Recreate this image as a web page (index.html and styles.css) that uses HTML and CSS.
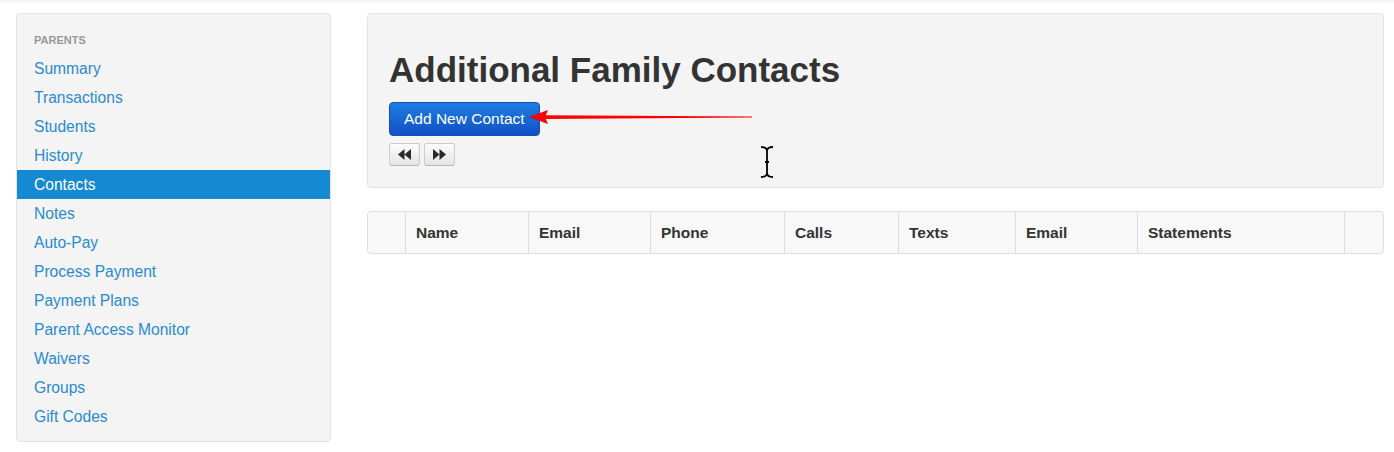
FILE: index.html
```html
<!DOCTYPE html>
<html lang="en">
<head>
  <meta charset="UTF-8" />
  <title>Additional Family Contacts</title>
  <link rel="stylesheet" href="styles.css">
</head>
<body>
  <div class="topbar"></div>

  <div class="page">
    <!-- Sidebar -->
    <div class="sidebar">
      <div class="nav-header">PARENTS</div>
      <ul class="nav">
        <li><a href="#">Summary</a></li>
        <li><a href="#">Transactions</a></li>
        <li><a href="#">Students</a></li>
        <li><a href="#">History</a></li>
        <li class="active"><a href="#">Contacts</a></li>
        <li><a href="#">Notes</a></li>
        <li><a href="#">Auto-Pay</a></li>
        <li><a href="#">Process Payment</a></li>
        <li><a href="#">Payment Plans</a></li>
        <li><a href="#">Parent Access Monitor</a></li>
        <li><a href="#">Waivers</a></li>
        <li><a href="#">Groups</a></li>
        <li><a href="#">Gift Codes</a></li>
      </ul>
    </div>

    <!-- Main content -->
    <div class="main">
      <div class="well">
        <h1>Additional Family Contacts</h1>
        <button class="btn-primary">Add New Contact</button>
        <div class="pager">
          <button class="btn-small">
            <svg width="13" height="11" viewBox="0 0 12 10"><path d="M6 0 L0 5 L6 10 Z M12 0 L6 5 L12 10 Z" fill="#2a2a2a"/></svg>
          </button>
          <button class="btn-small">
            <svg width="13" height="11" viewBox="0 0 12 10"><path d="M0 0 L6 5 L0 10 Z M6 0 L12 5 L6 10 Z" fill="#2a2a2a"/></svg>
          </button>
        </div>

        <!-- annotation arrow -->
        <svg class="arrow" width="230" height="18" viewBox="0 0 230 18">
          <path d="M16 7.3 L223 8.4 L223 9.4 L16 10.9 Z" fill="#f00"/>
          <path d="M0 9 L19 2 L16 9 L19 16 Z" fill="#f00"/>
        </svg>

        <!-- text cursor -->
        <svg class="ibeam" width="14" height="32" viewBox="0 0 14 32">
          <path d="M1 1 Q7 1 7 5 Q7 1 13 1 M7 5 L7 27 M1 31 Q7 31 7 27 Q7 31 13 31 M5 16 L9 16" fill="none" stroke="#000" stroke-width="1.8"/>
        </svg>
      </div>

      <table class="contacts">
        <thead>
          <tr>
            <th class="c-check"></th>
            <th class="c-name">Name</th>
            <th class="c-email">Email</th>
            <th class="c-phone">Phone</th>
            <th class="c-calls">Calls</th>
            <th class="c-texts">Texts</th>
            <th class="c-email2">Email</th>
            <th class="c-statements">Statements</th>
            <th class="c-actions"></th>
          </tr>
        </thead>
      </table>
    </div>
  </div>
</body>
</html>
```

FILE: styles.css
```css
* {
  box-sizing: border-box;
}

body {
  margin: 0;
  font-family: "Liberation Sans", Arial, sans-serif;
  background: #fff;
  color: #333;
}

.topbar {
  height: 3px;
  background: #f6f6f6;
}

.page {
  display: flex;
  align-items: flex-start;
  gap: 36px;
  padding: 10px 10px 0 16px;
}

/* Sidebar */
.sidebar {
  width: 315px;
  flex-shrink: 0;
  background: #f4f4f4;
  border: 1px solid #e3e3e3;
  border-radius: 4px;
  padding: 19px 0 10px;
}

.nav-header {
  padding: 0 17px;
  font-size: 11px;
  line-height: 14px;
  font-weight: bold;
  color: #999;
  margin-bottom: 7px;
}

.nav {
  list-style: none;
  margin: 0;
  padding: 0;
}

.nav li a {
  display: block;
  padding: 0 17px;
  line-height: 29px;
  font-size: 15.6px;
  color: #2a8ad2;
  text-decoration: none;
}

.nav li.active a {
  background: #1589d1;
  color: #fff;
}

/* Main */
.main {
  flex: 1;
}

.well {
  position: relative;
  background: #f4f4f4;
  border: 1px solid #e3e3e3;
  border-radius: 4px;
  padding: 36px 21px 21px;
  margin-bottom: 23px;
}

h1 {
  margin: 0 0 12px;
  font-size: 35px;
  line-height: 40px;
  font-weight: bold;
  color: #333;
}

.btn-primary {
  display: block;
  height: 34px;
  padding: 0 14px;
  font-family: inherit;
  font-size: 15.5px;
  color: #fff;
  background: linear-gradient(#1d7ee0, #1250c6);
  border: 1px solid #1450b8;
  border-radius: 4px;
}

.pager {
  display: flex;
  gap: 4px;
  margin-top: 7px;
}

.btn-small {
  width: 31px;
  height: 23px;
  padding: 0;
  display: flex;
  align-items: center;
  justify-content: center;
  background: linear-gradient(#fdfdfd, #e4e4e4);
  border: 1px solid #ccc;
  border-bottom-color: #b8b8b8;
  border-radius: 3px;
}

.arrow {
  position: absolute;
  left: 161px;
  top: 94px;
}

.ibeam {
  position: absolute;
  left: 392px;
  top: 132px;
}

/* Table */
.contacts {
  width: 100%;
  border-collapse: separate;
  border-spacing: 0;
  background: #f8f8f8;
  border: 1px solid #ddd;
  border-radius: 4px;
}

.contacts th {
  height: 41px;
  padding: 0 10px;
  text-align: left;
  font-size: 15.5px;
  font-weight: bold;
  color: #333;
  border-left: 1px solid #ddd;
}

.contacts th:first-child {
  border-left: none;
}

.c-check { width: 37px; }
.c-name { width: 123px; }
.c-email { width: 122px; }
.c-phone { width: 134px; }
.c-calls { width: 114px; }
.c-texts { width: 117px; }
.c-email2 { width: 122px; }
.c-statements { width: 207px; }
```
